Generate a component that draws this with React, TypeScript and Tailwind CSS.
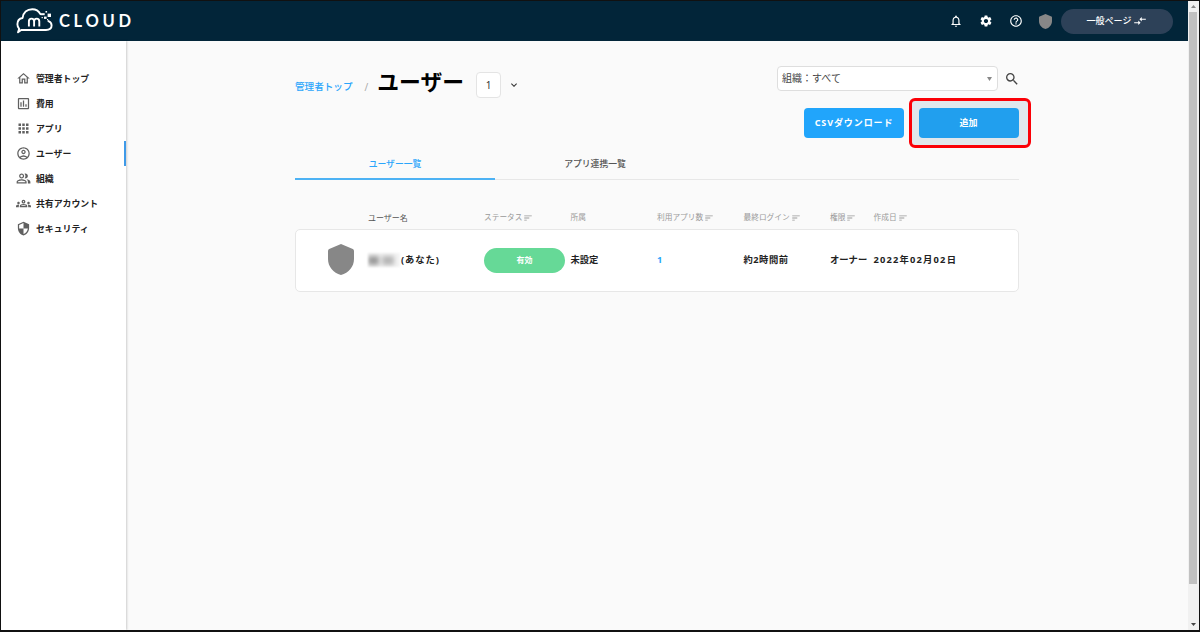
import React from "react";
import {
  MdNotificationsNone,
  MdSettings,
  MdHelpOutline,
  MdCompareArrows,
  MdOutlineHome,
  MdOutlineInsertChartOutlined,
  MdApps,
  MdOutlineAccountCircle,
  MdOutlinePeopleAlt,
  MdOutlineGroups,
  MdOutlineSecurity,
  MdSort,
  MdSearch,
  MdExpandMore,
} from "react-icons/md";

const navItems = [
  { label: "管理者トップ", icon: MdOutlineHome },
  { label: "費用", icon: MdOutlineInsertChartOutlined },
  { label: "アプリ", icon: MdApps },
  { label: "ユーザー", icon: MdOutlineAccountCircle, active: true },
  { label: "組織", icon: MdOutlinePeopleAlt },
  { label: "共有アカウント", icon: MdOutlineGroups },
  { label: "セキュリティ", icon: MdOutlineSecurity },
];

const columns = [
  { label: "ユーザー名", sort: false, dark: true },
  { label: "ステータス", sort: true },
  { label: "所属", sort: false },
  { label: "利用アプリ数", sort: true },
  { label: "最終ログイン", sort: true },
  { label: "権限", sort: true },
  { label: "作成日", sort: true },
];

function Shield({ className }: { className: string }) {
  return (
    <svg viewBox="0 0 26 31" preserveAspectRatio="none" className={className} fill="#878787">
      <path d="M13 0 24.8 5.1Q26 5.6 26 7V15C26 22.5 20.8 29 13 31C5.2 29 0 22.5 0 15V7Q0 5.6 1.2 5.1Z" />
    </svg>
  );
}

function Logo() {
  return (
    <div className="flex items-center">
      <svg width="37" height="26" viewBox="0 0 37 26" fill="none" stroke="#fff">
        <path
          d="M24.4 6.1C22.6 2.8 19.8 1.2 16.3 1.2C11 1.2 7.2 4.6 6.6 10C3.3 10.5 1.4 13 1.4 16.2C1.4 18.2 2 19.6 3.2 20.8L2 24.3L5.2 22H30C33.3 22 35.6 20.3 35.6 17.6C35.6 15.4 34.4 13.8 32.4 13.1"
          strokeWidth="1.9"
          strokeLinecap="round"
          strokeLinejoin="round"
        />
        <path
          d="M12.9 18.5V13.4Q12.9 10.6 15.5 10.6Q18.1 10.6 18.1 13.4V18.5M18.1 13.4Q18.1 10.6 20.7 10.6Q23.3 10.6 23.3 13.4V18.5"
          strokeWidth="1.9"
        />
        <g fill="#fff" stroke="none">
          <rect x="24.5" y="5.2" width="4.2" height="2" />
          <rect x="31.6" y="5.6" width="3.4" height="3.4" />
          <rect x="29.5" y="3" width="1.6" height="1.6" />
          <rect x="28" y="8.6" width="2.6" height="2.3" />
          <rect x="25.6" y="9" width="1.2" height="1.2" />
          <rect x="31" y="11" width="1.2" height="1.2" />
        </g>
      </svg>
      <span className="ml-[6px] font-['Lato',sans-serif] text-[16.5px] leading-none font-bold tracking-[3.7px] text-white">
        CLOUD
      </span>
    </div>
  );
}

export default function App() {
  return (
    <div className="flex h-[632px] w-[1200px] overflow-hidden border border-b-2 border-[#111] bg-[#fafafa] font-['Noto_Sans','Noto_Sans_CJK_JP',sans-serif] text-[9px] leading-none text-[#333]">
      <div className="flex min-w-0 flex-1 flex-col">
        <header className="flex h-10 shrink-0 items-center justify-between bg-[#022539] pr-[15px] pl-[15px]">
          <Logo />
          <div className="flex items-center text-white">
            <MdNotificationsNone size={14} />
            <MdSettings size={14} className="ml-4" />
            <MdHelpOutline size={14} className="ml-4" />
            <Shield className="ml-[16px] h-[15px] w-[13px]" />
            <button className="ml-[9px] flex h-[25px] w-[112px] items-center justify-center gap-[2px] rounded-full bg-[#2d4158] text-[9px] font-medium">
              <span className="-translate-y-px">一般ページ</span>
              <MdCompareArrows size={14} />
            </button>
          </div>
        </header>

        <div className="flex min-h-0 flex-1">
          <nav className="w-[125px] shrink-0 bg-white pt-[25px] shadow-[1px_0_2px_rgba(0,0,0,0.18)]">
            {navItems.map(({ label, icon: Icon, active }) => (
              <div
                key={label}
                className={
                  "flex h-[25px] items-center border-r-2 pl-[15px] " +
                  (active ? "border-[#3f9ae8]" : "border-transparent")
                }
              >
                <Icon size={15} className="text-[#606060]" />
                <span className="ml-[5px] pt-px text-[8.9px] font-bold whitespace-nowrap text-[#222]">{label}</span>
              </div>
            ))}
          </nav>

          <main className="ml-[169px] w-[724px] shrink-0">
            <div className="flex h-[106px] justify-between">
              <div className="flex pt-[30px]">
                <span className="mt-[11px] text-[9.6px] font-medium text-[#2aa5fb]">管理者トップ</span>
                <span className="mt-[11px] ml-[12px] text-[10px] text-[#aaa]">/</span>
                <h1 className="ml-[9px] text-[21.8px] leading-[22px] font-bold text-black">ユーザー</h1>
                <div className="mt-px ml-[12px] flex h-[26px] w-[25px] items-center justify-center rounded border border-[#e4e4e4] bg-white text-[10px] text-[#333]">
                  1
                </div>
                <MdExpandMore size={12} className="mt-[8px] ml-[7px] text-[#333]" />
              </div>
              <div className="flex flex-col items-end pt-[25px]">
                <div className="flex items-center">
                  <div className="flex h-[25px] w-[221px] items-center justify-between rounded-[4px] border border-[#dedede] bg-white pr-[5px] pl-[4px] text-[10px] text-[#444]">
                    <span className="-translate-y-px">組織：すべて</span>
                    <svg width="5" height="4" viewBox="0 0 5 4" fill="#888">
                      <path d="M0 0H5L2.5 4Z" />
                    </svg>
                  </div>
                  <MdSearch size={16} className="mr-[-1px] ml-[6px] text-[#444]" />
                </div>
                <div className="mt-[7px] mr-[-12px] flex items-center">
                  <button className="mr-[5px] h-[30px] w-[100px] rounded-[4px] bg-[#21a5fb] pb-px text-[9px] font-bold tracking-[0.9px] text-white">
                    CSVダウンロード
                  </button>
                  <div className="flex h-[50px] w-[122px] items-center justify-center rounded-[6px] border-3 border-[#fb0007] bg-[#e1e7ec]">
                    <button className="mr-[3px] h-[30px] w-[100px] rounded-[4px] bg-[#219fee] pb-px text-[9px] font-bold text-white">
                      追加
                    </button>
                  </div>
                </div>
              </div>
            </div>

            <div className="flex h-[33px] border-b border-[#e7e7e7] text-[8.8px] font-medium">
              <div className="flex h-[33px] w-[200px] items-center justify-center border-b-2 border-[#4db2f4] pt-[3px] text-[#2aa5fb]">
                ユーザー一覧
              </div>
              <div className="flex h-[33px] w-[200px] items-center justify-center border-b-2 border-transparent pt-[3px] text-[#555]">
                アプリ連携一覧
              </div>
            </div>

            <div className="mt-[33px] grid h-[16px] grid-cols-[116px_86.5px_86.5px_86.5px_86.5px_43.5px_1fr] pl-[73px] text-[7.7px] whitespace-nowrap text-[#999]">
              {columns.map((column) => (
                <div key={column.label} className="flex h-[10px] items-center">
                  <span className={column.dark ? "text-[8px] text-[#555]" : ""}>{column.label}</span>
                  {column.sort && <MdSort size={10} className="ml-px shrink-0" />}
                </div>
              ))}
            </div>

            <div className="flex h-[63px] items-center rounded-[5px] border border-[#e7e7e7] bg-white pb-px pl-[32px] text-[9.3px] font-bold text-[#222]">
              <Shield className="mb-px h-[31px] w-[26px] shrink-0" />
              <div className="ml-[14px] grid flex-1 grid-cols-[116px_86.5px_86.5px_86.5px_86.5px_43.5px_1fr] items-center whitespace-nowrap">
                <div className="flex items-center">
                  <div className="flex h-[14px] w-[32px] items-center gap-[3px] overflow-hidden bg-[#f4f4f4] blur-[1px]">
                    <span className="h-[9px] w-[11px] bg-[#999] blur-[2px]" />
                    <span className="h-[9px] w-[12px] bg-[#b5b5b5] blur-[2px]" />
                  </div>
                  <span className="ml-[1px] tracking-[0.9px]">(あなた)</span>
                </div>
                <div className="flex h-[25px] w-[81px] items-center justify-center rounded-full bg-[#66d997] text-[8px] text-white">
                  有効
                </div>
                <span>未設定</span>
                <span className="text-[#2aa5fb]">1</span>
                <span className="tracking-[0.5px]">約2時間前</span>
                <span>オーナー</span>
                <span className="tracking-[1.2px]">2022年02月02日</span>
              </div>
            </div>
          </main>
        </div>
      </div>

      <div className="flex w-[11px] shrink-0 flex-col items-center bg-[#f1f1f1] py-[4px] pr-px">
        <svg width="5" height="3" viewBox="0 0 5 3" fill="#888" className="shrink-0">
          <path d="M0 3H5L2.5 0Z" />
        </svg>
        <div className="mt-[4px] h-[572px] w-[8px] shrink-0 bg-[#c1c1c1]" />
        <svg width="5" height="3" viewBox="0 0 5 3" fill="#444" className="mt-auto shrink-0">
          <path d="M0 0H5L2.5 3Z" />
        </svg>
      </div>
    </div>
  );
}
